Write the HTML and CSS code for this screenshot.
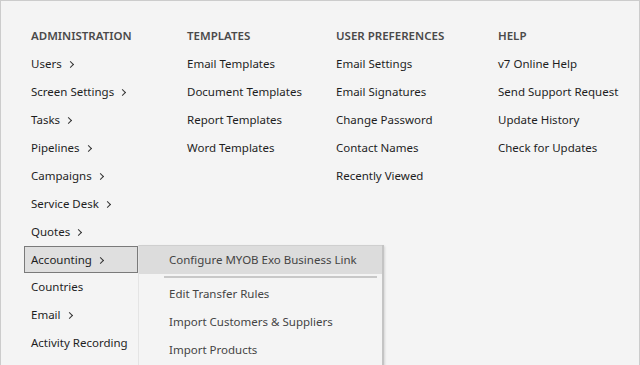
FILE: index.html
```
<!DOCTYPE html>
<html>
<head>
    <meta charset="utf-8">
    <title>Settings Menu</title>
    <link rel="stylesheet" href="styles.css">
</head>
<body>
    <div class="frame">
        <div class="columns">
            <div class="col col-admin">
                <div class="head">ADMINISTRATION</div>
                <div class="item">Users <span class="chev"></span></div>
                <div class="item">Screen Settings <span class="chev"></span></div>
                <div class="item">Tasks <span class="chev"></span></div>
                <div class="item">Pipelines <span class="chev"></span></div>
                <div class="item">Campaigns <span class="chev"></span></div>
                <div class="item">Service Desk <span class="chev"></span></div>
                <div class="item">Quotes <span class="chev"></span></div>
                <div class="item active">Accounting <span class="chev"></span>
                    <div class="submenu">
                        <div class="sub-item hover">Configure MYOB Exo Business Link</div>
                        <div class="sep"></div>
                        <div class="sub-item">Edit Transfer Rules</div>
                        <div class="sub-item">Import Customers &amp; Suppliers</div>
                        <div class="sub-item">Import Products</div>
                    </div>
                </div>
                <div class="item">Countries</div>
                <div class="item">Email <span class="chev"></span></div>
                <div class="item">Activity Recording</div>
            </div>
            <div class="col col-templates">
                <div class="head">TEMPLATES</div>
                <div class="item">Email Templates</div>
                <div class="item">Document Templates</div>
                <div class="item">Report Templates</div>
                <div class="item">Word Templates</div>
            </div>
            <div class="col col-prefs">
                <div class="head">USER PREFERENCES</div>
                <div class="item">Email Settings</div>
                <div class="item">Email Signatures</div>
                <div class="item">Change Password</div>
                <div class="item">Contact Names</div>
                <div class="item">Recently Viewed</div>
            </div>
            <div class="col col-help">
                <div class="head">HELP</div>
                <div class="item">v7 Online Help</div>
                <div class="item">Send Support Request</div>
                <div class="item">Update History</div>
                <div class="item">Check for Updates</div>
            </div>
        </div>
    </div>
</body>
</html>
```

FILE: styles.css
```
html, body {
    margin: 0;
    padding: 0;
    background: #f4f4f4;
    font-family: "Noto Sans", "Open Sans", sans-serif;
    font-size: 11.5px;
    overflow: hidden;
    height: 365px;
}

.frame {
    height: 365px;
    box-sizing: border-box;
    border: 1px solid #cccccc;
    border-bottom: none;
    background: #f4f4f4;
    overflow: hidden;
}

.columns {
    display: flex;
    padding: 21px 0 0 23px;
}

.col {
    display: flex;
    flex-direction: column;
}

.col-admin { width: 156px; }
.col-templates { width: 149px; }
.col-prefs { width: 162px; }

.head,
.item {
    height: 28px;
    line-height: 28px;
    padding-left: 7px;
    white-space: nowrap;
}

.head {
    color: #4a4a4a;
    font-weight: 600;
}

.item {
    color: #1e1e1e;
}

.col-admin .item {
    position: relative;
    width: 114px;
    box-sizing: border-box;
}

.chev {
    display: inline-block;
    width: 4px;
    height: 4px;
    margin-left: 3px;
    border-right: 1.3px solid #333;
    border-top: 1.3px solid #333;
    transform: rotate(45deg);
    vertical-align: 1px;
}

.item.active {
    background: #dfdfdf;
    border: 1px solid #7a7a7a;
    height: 27px;
    line-height: 25px;
    padding-left: 6px;
}

.submenu {
    position: absolute;
    left: calc(100% + 1px);
    top: -2px;
    width: 243px;
    height: 120px;
    background: #f4f4f4;
    border-top: 1px solid #cfcfcf;
    border-left: 1px solid #e4e4e4;
    box-shadow: 2px 0 0 #c4c4c4, 3px 1px 2px rgba(0, 0, 0, 0.12);
}

.sub-item {
    height: 28px;
    line-height: 28px;
    padding-left: 30px;
    color: #444444;
}

.sub-item.hover {
    background: #dcdcdc;
}

.sep {
    height: 2px;
    margin: 2px 5px 2px 25px;
    background: #c8c8c8;
}
```
